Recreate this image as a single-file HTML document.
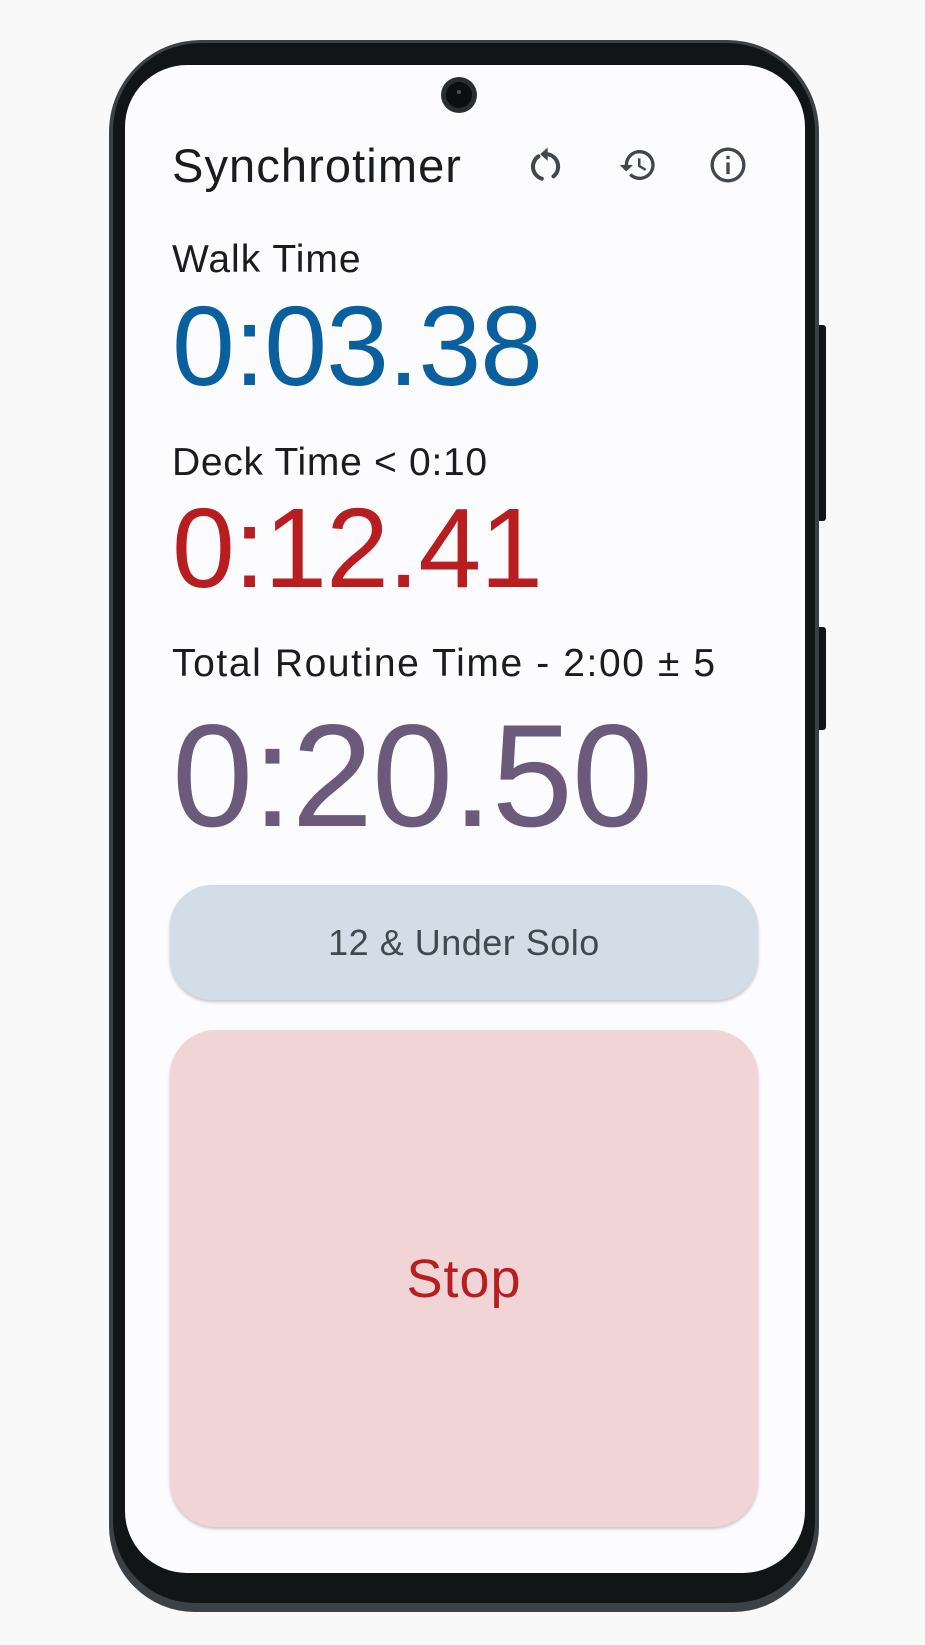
<!DOCTYPE html>
<html><head><meta charset="utf-8"><style>
html,body{margin:0;padding:0;width:925px;height:1645px;background:#f9f9f9;overflow:hidden;font-family:"Liberation Sans",sans-serif}
.frame{position:absolute;left:109px;top:40px;width:710px;height:1572px;background:#3b4144;border-radius:92px 92px 86px 86px}
.inner{position:absolute;left:113px;top:43px;width:702px;height:1560px;background:#111516;border-radius:88px 88px 82px 82px}
.screen{position:absolute;left:125px;top:65px;width:680px;height:1508px;background:#fcfcfe;border-radius:62px;overflow:hidden}
.btn{position:absolute;left:819px;width:7px;background:#111516;border-radius:0 3px 3px 0}
.cam{position:absolute;left:441px;top:77px;width:36px;height:36px;border-radius:50%;background:#2a2e30}
.cam:before{content:"";position:absolute;left:5px;top:5px;width:26px;height:26px;border-radius:50%;background:#0c0e0f}
.cam:after{content:"";position:absolute;left:16px;top:13px;width:4px;height:4px;border-radius:50%;background:#4a5256}
.t{position:absolute;left:172px;white-space:nowrap;line-height:1}
.icon{position:absolute;top:145px;width:40px;height:40px}
.pill{position:absolute;left:170px;width:588px;display:flex;align-items:center;justify-content:center;box-shadow:0 2px 3px rgba(0,0,0,.22)}
</style></head><body>
<div class="frame"></div><div class="inner"></div>
<div class="btn" style="top:325px;height:196px"></div>
<div class="btn" style="top:627px;height:103px"></div>
<div class="screen"></div>
<div class="cam"></div>
<div class="t" style="top:142px;font-size:47px;color:#1b1c1f;letter-spacing:1.1px">Synchrotimer</div>
<svg class="icon" style="left:526px" viewBox="0 0 24 24"><path d="M13 1.5L8.5 5.5 13 9.5z" fill="#42474e"/><path d="M12.5 5.5a7.5 7.5 0 0 1 4 13.3M9.5 20.2A7.5 7.5 0 0 1 7.5 6.8" fill="none" stroke="#42474e" stroke-width="2.4" stroke-linecap="round"/></svg>
<svg class="icon" style="left:618px" viewBox="0 0 24 24"><path d="M13 3a9 9 0 0 0-9 9H1l3.9 3.9L9 12H6a7 7 0 1 1 2.05 4.95l-1.42 1.42A9 9 0 1 0 13 3zm-1 5v5l4.28 2.54.72-1.21-3.5-2.08V8H12z" fill="#42474e"/></svg>
<svg class="icon" style="left:708px" viewBox="0 0 24 24"><circle cx="12" cy="12" r="9.5" fill="none" stroke="#42474e" stroke-width="2"/><rect x="11" y="10.5" width="2" height="7" fill="#42474e"/><rect x="11" y="6.5" width="2" height="2" fill="#42474e"/></svg>
<div class="t" style="top:240px;font-size:39px;color:#1b1c1f;letter-spacing:1px">Walk Time</div>
<div class="t" style="top:290px;font-size:113px;color:#0a5f9e;letter-spacing:-1px">0:03.38</div>
<div class="t" style="top:443px;font-size:39px;color:#1b1c1f;letter-spacing:0.7px">Deck Time &lt; 0:10</div>
<div class="t" style="top:492px;font-size:113px;color:#b81d1f;letter-spacing:-1px">0:12.41</div>
<div class="t" style="top:644px;font-size:39px;color:#1b1c1f;letter-spacing:1.6px">Total Routine Time - 2:00 ± 5</div>
<div class="t" style="top:703px;font-size:146px;color:#6b5a7c;letter-spacing:-1px">0:20.50</div>
<div class="pill" style="top:885px;height:115px;border-radius:42px;background:#d3dde7;color:#41484f;font-size:36px;letter-spacing:0.5px">12 &amp; Under Solo</div>
<div class="pill" style="top:1030px;height:497px;border-radius:46px;background:#f1d4d5;color:#b81d1f;font-size:54px;letter-spacing:1px">Stop</div>
</body></html>
